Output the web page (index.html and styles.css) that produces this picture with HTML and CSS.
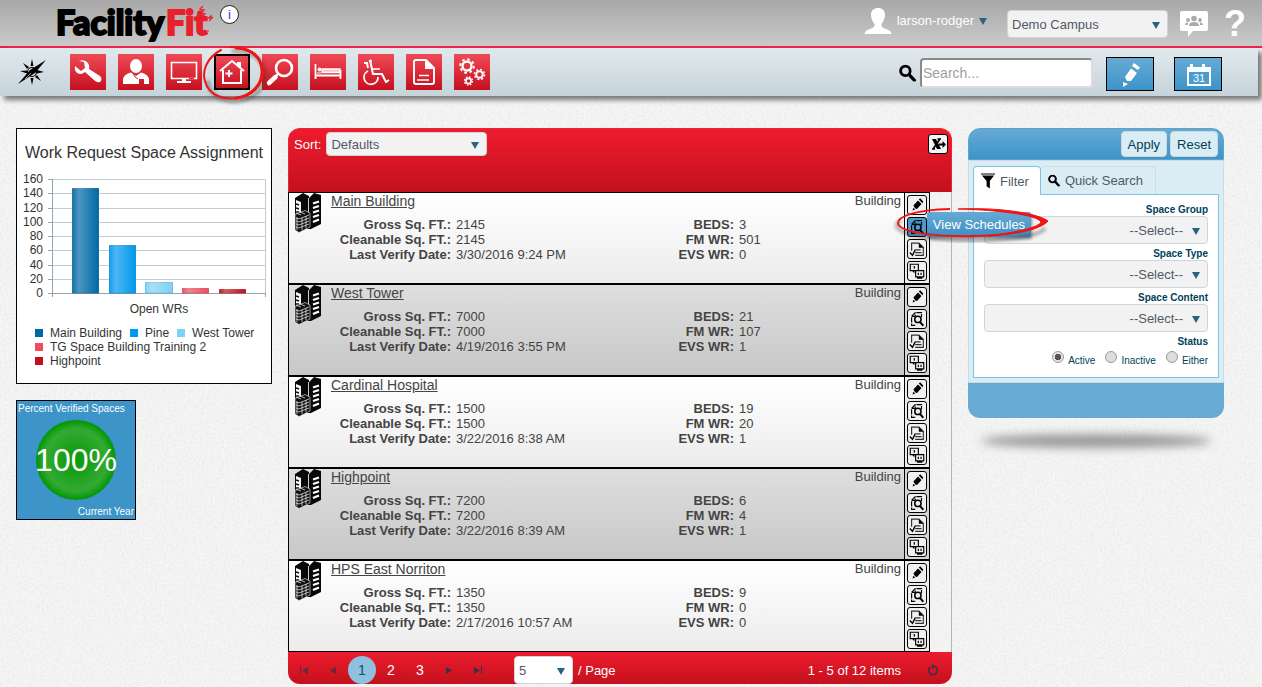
FILE: index.html
```html
<!DOCTYPE html>
<html lang="en">
<head>
<meta charset="utf-8">
<title>FacilityFit - Space</title>
<link rel="stylesheet" href="styles.css">
</head>
<body>
<svg class="paper" aria-hidden="true"><filter id="grain"><feTurbulence type="fractalNoise" baseFrequency="0.45" numOctaves="3" seed="4"/><feColorMatrix values="0 0 0 0 0.4  0 0 0 0 0.4  0 0 0 0 0.4  0.3 0 0 0 -0.12"/></filter><rect width="100%" height="100%" filter="url(#grain)"/></svg>
<svg class="sprite" aria-hidden="true">
  <symbol id="building" viewBox="0 0 28 40">
    <path d="M1 5 9 0 15 3V30H1z" fill="#080808"/><path d="M15 5 20 0 27 2V31L17 36H13V5z" fill="#080808"/>
    <path d="M2 7 7 9V19L2 21z" fill="#f4f4f4"/><path d="M2 11 5 12M2 15 5 16M2 19 5 19" stroke="#111" stroke-width="1.500"/>
    <path d="M14.500 5V20" stroke="#ccc"/>
    <path d="M19 10.500 25 8.500M19 15 25 13M19 19.500 25 17.500M19 24 25 22M19 29 25 26.500" stroke="#fff" stroke-width="2.200"/>
    <path d="M1 21.500 11 17.500 16 20V34L5 39.500 1 37z" fill="#101010" stroke="#f4f4f4" stroke-width=".6"/>
    <path d="M2 25 5 26 15 22M2 28 5 29 15 25M2 31 5 32 15 28M2 34 5 35 15 31M3 20.500 7 22M6 19 11 21M8 25V37M12 23V35M3 24V37" stroke="#ddd" stroke-width=".8" fill="none"/>
  </symbol>
  <symbol id="edit" viewBox="0 0 20 20"><path d="M5 16 6 13 8 15z M6 10.500 11 5 15 9 10 14.500 8 14z M12 4 13.500 2.500 17 6 16 8z" fill="#000"/></symbol>
  <symbol id="look" viewBox="0 0 20 20"><path d="M8 17H4V7L8 3H15V8M4 7H8V3" fill="none" stroke="#000" stroke-width="1.300" stroke-dasharray="6 1"/><circle cx="11" cy="10.500" r="3.500" fill="none" stroke="#000" stroke-width="1.700"/><path d="M13 13 17 17.500" stroke="#000" stroke-width="2.200"/></symbol>
  <symbol id="check" viewBox="0 0 20 20"><path d="M4 12V3.500H12L17 8V17H8M8 14H15M8 11H14" fill="none" stroke="#333" stroke-width="1.300"/><path d="M12 3V8.500H17z"/><path d="M2 14 5 17 8 11" fill="none" stroke="#000" stroke-width="1.500"/></symbol>
  <symbol id="boxes" viewBox="0 0 20 20"><path d="M2.500 2.500H11.500V9.500H6.500V11L5 9.500H2.500zM8.500 9.500H17.500V16.500H8.500zM10 18H16M7 4.500V7.500M11.500 12V14.500M14.500 12V14.500" fill="none" stroke="#000" stroke-width="1.300"/></symbol>
  <symbol id="glass" viewBox="0 0 16 16"><circle cx="6" cy="6" r="4.500" fill="none" stroke="#000" stroke-width="2.600"/><path d="M9.500 9.500 14.500 15" stroke="#000" stroke-width="3" stroke-linecap="round"/></symbol>
</svg>

<header class="top">
  <a class="logo" href="#">Facility<span class="fit">Fit</span><svg class="squiggle" viewBox="0 0 16 26"><path d="M5 0 2 3 6 4 3 7 7 8 4 12 8 11 9 13 13 10 12 14 15 11" fill="none" stroke="#e8202e" stroke-width="1.300"/><path d="M8 25h3" stroke="#e8202e"/></svg></a>
  <button class="info" type="button" aria-label="Information">i</button>
  <a class="user" href="#"><svg viewBox="0 0 28 28" width="28" height="28"><path d="M14 1C18 1 21 3 21 8 21 12 19 15 17.500 17 17 20 19 21 22 22 25 23 27 24 27.500 27H.500C1 24 3 23 6 22 9 21 11 20 10.500 17 9 15 7 12 7 8 7 3 10 1 14 1z" fill="#fff"/></svg><span>larson-rodger</span><i class="caret"></i></a>
  <span class="pick campus"><select aria-label="Campus"><option>Demo Campus</option></select></span>
  <a class="chat" href="#" aria-label="Community"><svg viewBox="0 0 28 27" width="28" height="27"><path d="M2 0H26Q28 0 28 2V18Q28 20 26 20H13L8 26V20H2Q0 20 0 18V2Q0 0 2 0z" fill="#fff"/><g fill="#aaa"><circle cx="14" cy="7.500" r="2.800"/><path d="M9 15Q9 11 14 11T19 15z"/><circle cx="8" cy="9" r="1.900"/><circle cx="20" cy="9" r="1.900"/><path d="M5 14Q5 11 8 11.500V14zM23 14Q23 11 20 11.500V14z"/></g></svg></a>
  <a class="help" href="#">?</a>
</header>

<nav class="bar">
  <a class="compass" href="#" aria-label="Home"><svg viewBox="0 0 28 26" width="28" height="26"><path d="M14 0 15.500 7H12.500zM14 26 12.500 19H15.500zM2 12 9 11.500V14.500zM26 13 19 11V14.500zM5 4 11 8 9 10zM23 22 19 16 17 18z"/><circle cx="14" cy="13" r="4.500" fill="none" stroke="#000" stroke-width="1.200"/><path d="M28 1 17 14 0 25 12 11z"/><path d="M7 20 13 14" stroke="#d9e2e6" stroke-width=".7"/></svg></a>
  <ul class="apps">
    <li><a href="#" aria-label="Work requests"><svg viewBox="0 0 36 36"><path d="M5 12 11 17 15 14 14 8 9 7Q15 5 18 9 20 12 19 15L30 22Q33 25 30 28 27 29 24 26L15 18Q10 22 6 18 4 15 5 12z" fill="#fff"/></svg></a></li>
    <li><a href="#" aria-label="People"><svg viewBox="0 0 36 36"><ellipse cx="18" cy="12" rx="6" ry="7" fill="#fff"/><path d="M5 30V25Q6 20 13 18.500L18 22 23 18.500Q30 20 31 25V30H26V25H21V30z" fill="#fff"/><path d="M14 18 17 23 20 25" fill="none" stroke="#e23040" stroke-width="1"/></svg></a></li>
    <li><a href="#" aria-label="Assets"><svg viewBox="0 0 36 36"><path d="M5.500 8.500H30.500V24.500H5.500z" fill="none" stroke="#fff" stroke-width="1.600"/><path d="M16 25V27H11V29H25V27H20V25" fill="#fff"/><path d="M23 24.500H28" stroke="#d62839"/></svg></a></li>
    <li class="here"><a href="#" aria-label="Space"><svg viewBox="2 2 32 32"><path d="M6 17 18 7 30 17M9 16V29H27V16M24 12V9H26V13" fill="none" stroke="#fff" stroke-width="2"/><path d="M15 16V23M11.500 19.500H18.500" stroke="#fff" stroke-width="2"/></svg></a>
      <svg class="ring ring-app" viewBox="0 0 64 62"><g fill="none" stroke-linecap="round"><path d="M6 38C8 54 24 59 38 57 58 53 65 38 62 26 60 14 48 7 31 7" stroke="#333" stroke-opacity=".35" stroke-width="4" filter="url(#soft)"/><path d="M19 6C4 14 0 28 3 37 7 53 24 56 36 54 53 51 62 39 60 24 58 10 42 2 28 3" stroke="#f01414" stroke-width="2"/><path d="M34 4C50 5 59 13 60 26 61 40 50 52 34 54" stroke="#f01414" stroke-width="3"/></g><filter id="soft"><feGaussianBlur stdDeviation="1.500"/></filter></svg></li>
    <li><a href="#" aria-label="Find"><svg viewBox="0 0 36 36"><circle cx="22" cy="14" r="8" fill="none" stroke="#fff" stroke-width="2.600"/><path d="M16 20 13 23" stroke="#fff" stroke-width="2"/><path d="M13.500 23 7 29" stroke="#fff" stroke-width="4.500" stroke-linecap="round"/></svg></a></li>
    <li><a href="#" aria-label="Beds"><svg viewBox="0 0 36 36"><path d="M5.500 10V25M30.500 16V25M5 21.500H31" fill="none" stroke="#fff" stroke-width="1.800"/><path d="M12 15H30V18.500H12z" fill="#f8c4c8" stroke="#fff" stroke-width="1.300"/><circle cx="9.500" cy="15.500" r="1.900" fill="#fff"/><path d="M7 19H11" stroke="#fff"/></svg></a></li>
    <li><a href="#" aria-label="Patient transport"><svg viewBox="0 0 36 36"><path d="M6 9H9L10 14M12 6 15 20H24L28 28 31 26" fill="none" stroke="#fff" stroke-width="2"/><path d="M13 15H22" stroke="#fff" stroke-width="1.500"/><path d="M10 17A7 7 0 1 0 20 23" fill="none" stroke="#fff" stroke-width="1.800"/><circle cx="12.500" cy="7" r="1.600" fill="#fff"/></svg></a></li>
    <li><a href="#" aria-label="Documents"><svg viewBox="0 0 36 36"><path d="M10 6H20L28 14V28Q28 30 26 30H10Q8 30 8 28V8Q8 6 10 6z" fill="none" stroke="#fff" stroke-width="1.900"/><path d="M19 5V15H28z" fill="#fff"/><path d="M13 21.500H23M11 26H23" stroke="#fff" stroke-width="1.400"/></svg></a></li>
    <li><a href="#" aria-label="Settings"><svg viewBox="0 0 36 36"><g fill="none" stroke="#fff"><circle cx="13" cy="12" r="4.500" stroke-width="2.400"/><circle cx="13" cy="12" r="6.800" stroke-width="2" stroke-dasharray="2.670 2.670"/><circle cx="25.500" cy="20.500" r="3.300" stroke-width="2"/><circle cx="25.500" cy="20.500" r="5" stroke-width="1.600" stroke-dasharray="1.960 1.960"/><circle cx="14.500" cy="27" r="2.600" stroke-width="1.700"/><circle cx="14.500" cy="27" r="4" stroke-width="1.400" stroke-dasharray="1.570 1.570"/></g></svg></a></li>
  </ul>
  <form class="find"><label for="q" aria-label="Search"><svg width="17" height="18" viewBox="0 0 16 16"><use href="#glass"/></svg></label><input id="q" type="text" placeholder="Search..."></form>
  <div class="tools">
    <button type="button" aria-label="New request"><svg viewBox="0 0 46 32"><path d="M18 19 24 10.500 30 15 24 23 20 23zM25 8 27 5 33 9.500 31 12zM16 24V29L21 26z" fill="#fff"/></svg></button>
    <button type="button" aria-label="Calendar"><svg viewBox="0 0 46 32"><path d="M12 9H15V6H18V9H27V6H30V9H36V28H12z" fill="#fff"/><path d="M14 14H34V26H14z" fill="#4b9ccc"/><text x="24" y="24" text-anchor="middle" class="cal">31</text></svg></button>
  </div>
</nav>

<main class="page">
  <aside class="side">
    <section class="chart">
      <h2>Work Request Space Assignment</h2>
      <svg class="plot" viewBox="0 0 254 150" role="img" aria-label="Open work requests by space">
        <defs>
          <linearGradient id="gl"><stop offset="0" stop-color="#fff" stop-opacity=".05"/><stop offset=".25" stop-color="#fff" stop-opacity=".3"/><stop offset="1" stop-color="#fff" stop-opacity="0"/></linearGradient>
        </defs>
        <path d="M35 8.500H248.500V122.500M35 22.500H248M35 37.500H248M35 51.500H248M35 65.500H248M35 79.500H248M35 94.500H248M35 108.500H248" fill="none" stroke="#c0cbd3"/>
        <path d="M35.500 8V126M31 122.500H249M248.500 122V126M31 8.500H35M31 22.500H35M31 37.500H35M31 51.500H35M31 65.500H35M31 79.500H35M31 94.500H35M31 108.500H35" fill="none" stroke="#94a3b0"/>
        <g stroke-opacity=".8">
          <path d="M55.500 122V17.500H81.500V122z" fill="#0069a5" stroke="#00588b"/><path d="M92.500 122V74.500H118.500V122z" fill="#0098ee" stroke="#0080c8"/><path d="M128.500 122V111.500H155.500V122z" fill="#7bd2f6" stroke="#67b0cf"/><path d="M165.500 122V117.500H191.500V122z" fill="#f04c5c" stroke="#c8404d"/><path d="M202.500 122V118.500H228.500V122z" fill="#c4101e" stroke="#a50d19"/>
        </g>
        <path d="M55 17H82V122H55z" fill="url(#gl)"/><path d="M92 74H119V122H92z" fill="url(#gl)"/><path d="M128 111H156V122H128z" fill="url(#gl)"/><path d="M165 117H192V122H165z" fill="url(#gl)"/><path d="M202 118H229V122H202z" fill="url(#gl)"/>
        <g text-anchor="end"><text x="26" y="12">160</text><text x="26" y="26">140</text><text x="26" y="41">120</text><text x="26" y="55">100</text><text x="26" y="69">80</text><text x="26" y="83">60</text><text x="26" y="98">40</text><text x="26" y="112">20</text><text x="26" y="126">0</text></g>
        <text x="142" y="142" text-anchor="middle">Open WRs</text>
      </svg>
      <ul class="legend"><li class="c1">Main Building</li><li class="c2">Pine</li><li class="c3">West Tower</li><li class="c4">TG Space Building Training 2</li><li class="c5">Highpoint</li></ul>
    </section>
    <section class="gauge"><p>Percent Verified Spaces</p><strong><span>100%</span></strong><p class="end">Current Year</p></section>
  </aside>

  <section class="list">
    <div class="list-head">
      <label for="sort">Sort:</label><span class="pick sort"><select id="sort"><option>Defaults</option></select></span>
      <button class="export" type="button" aria-label="Export to Excel"><svg viewBox="0 0 18 18"><path d="M3 4H7L12 14H8z"/><path d="M11 4 4 14M3 14H6M8.500 4H12" stroke="#000" stroke-width="1.600"/><path d="M10 9.500H15" stroke="#000" stroke-width="2"/><path d="M13.500 6 17 9.500 13.500 13z"/></svg></button>
    </div>
    <ul class="rows">
      <li class="row">
        <div class="cell"><svg class="thumb"><use href="#building"/></svg><div class="info-col"><div class="title"><a href="#">Main Building</a><span>Building</span></div>
          <dl><dt>Gross Sq. FT.:</dt><dd>2145</dd><dt>BEDS:</dt><dd>3</dd><dt>Cleanable Sq. FT.:</dt><dd>2145</dd><dt>FM WR:</dt><dd>501</dd><dt>Last Verify Date:</dt><dd>3/30/2016 9:24 PM</dd><dt>EVS WR:</dt><dd>0</dd></dl></div></div>
        <div class="acts"><button type="button" aria-label="Edit"><svg><use href="#edit"/></svg></button>
          <div class="hot"><button type="button" class="on" aria-describedby="tip"><svg><use href="#look"/></svg></button><span class="tip" id="tip" role="tooltip">View Schedules</span>
            <svg class="ring ring-tip" viewBox="0 0 160 40"><g fill="none"><path d="M8 14C-6 24 16 31 60 34 96 36 144 33 152 22" stroke="#333" stroke-opacity=".35" stroke-width="4" filter="url(#soft)"/><path d="M57 3C20 4 5 11 5 17 6 27 45 31 84 30 118 29 145 24 150 17" stroke="#f01414" stroke-width="2"/><path d="M65 3C110 1 146 8 155 15 150 22 125 28 95 30 126 26 146 21 148 16 145 9 105 4 65 3z" fill="#f01414" stroke="#f01414" stroke-width="1"/></g></svg></div>
          <button type="button" aria-label="Inspections"><svg><use href="#check"/></svg></button><button type="button" aria-label="Hierarchy"><svg><use href="#boxes"/></svg></button></div>
      </li>
      <li class="row alt">
        <div class="cell"><svg class="thumb"><use href="#building"/></svg><div class="info-col"><div class="title"><a href="#">West Tower</a><span>Building</span></div>
          <dl><dt>Gross Sq. FT.:</dt><dd>7000</dd><dt>BEDS:</dt><dd>21</dd><dt>Cleanable Sq. FT.:</dt><dd>7000</dd><dt>FM WR:</dt><dd>107</dd><dt>Last Verify Date:</dt><dd>4/19/2016 3:55 PM</dd><dt>EVS WR:</dt><dd>1</dd></dl></div></div>
        <div class="acts"><button type="button" aria-label="Edit"><svg><use href="#edit"/></svg></button><button type="button" aria-label="View Schedules"><svg><use href="#look"/></svg></button><button type="button" aria-label="Inspections"><svg><use href="#check"/></svg></button><button type="button" aria-label="Hierarchy"><svg><use href="#boxes"/></svg></button></div>
      </li>
      <li class="row">
        <div class="cell"><svg class="thumb"><use href="#building"/></svg><div class="info-col"><div class="title"><a href="#">Cardinal Hospital</a><span>Building</span></div>
          <dl><dt>Gross Sq. FT.:</dt><dd>1500</dd><dt>BEDS:</dt><dd>19</dd><dt>Cleanable Sq. FT.:</dt><dd>1500</dd><dt>FM WR:</dt><dd>20</dd><dt>Last Verify Date:</dt><dd>3/22/2016 8:38 AM</dd><dt>EVS WR:</dt><dd>1</dd></dl></div></div>
        <div class="acts"><button type="button" aria-label="Edit"><svg><use href="#edit"/></svg></button><button type="button" aria-label="View Schedules"><svg><use href="#look"/></svg></button><button type="button" aria-label="Inspections"><svg><use href="#check"/></svg></button><button type="button" aria-label="Hierarchy"><svg><use href="#boxes"/></svg></button></div>
      </li>
      <li class="row alt">
        <div class="cell"><svg class="thumb"><use href="#building"/></svg><div class="info-col"><div class="title"><a href="#">Highpoint</a><span>Building</span></div>
          <dl><dt>Gross Sq. FT.:</dt><dd>7200</dd><dt>BEDS:</dt><dd>6</dd><dt>Cleanable Sq. FT.:</dt><dd>7200</dd><dt>FM WR:</dt><dd>4</dd><dt>Last Verify Date:</dt><dd>3/22/2016 8:39 AM</dd><dt>EVS WR:</dt><dd>1</dd></dl></div></div>
        <div class="acts"><button type="button" aria-label="Edit"><svg><use href="#edit"/></svg></button><button type="button" aria-label="View Schedules"><svg><use href="#look"/></svg></button><button type="button" aria-label="Inspections"><svg><use href="#check"/></svg></button><button type="button" aria-label="Hierarchy"><svg><use href="#boxes"/></svg></button></div>
      </li>
      <li class="row">
        <div class="cell"><svg class="thumb"><use href="#building"/></svg><div class="info-col"><div class="title"><a href="#">HPS East Norriton</a><span>Building</span></div>
          <dl><dt>Gross Sq. FT.:</dt><dd>1350</dd><dt>BEDS:</dt><dd>9</dd><dt>Cleanable Sq. FT.:</dt><dd>1350</dd><dt>FM WR:</dt><dd>0</dd><dt>Last Verify Date:</dt><dd>2/17/2016 10:57 AM</dd><dt>EVS WR:</dt><dd>0</dd></dl></div></div>
        <div class="acts"><button type="button" aria-label="Edit"><svg><use href="#edit"/></svg></button><button type="button" aria-label="View Schedules"><svg><use href="#look"/></svg></button><button type="button" aria-label="Inspections"><svg><use href="#check"/></svg></button><button type="button" aria-label="Hierarchy"><svg><use href="#boxes"/></svg></button></div>
      </li>
    </ul>
    <div class="pager">
      <div class="pages">
        <button type="button" class="dim" aria-label="First page"><svg viewBox="0 0 8 8"><path d="M0 0H1V8H0zM8 1V8L2 4.500z"/></svg></button>
        <button type="button" class="dim" aria-label="Previous page"><svg viewBox="0 0 8 8"><path d="M7 1V8L1 4.500z"/></svg></button>
        <button type="button" class="now">1</button><button type="button">2</button><button type="button">3</button>
        <button type="button" aria-label="Next page"><svg viewBox="0 0 8 8"><path d="M1 1V8L7 4.500z"/></svg></button>
        <button type="button" aria-label="Last page"><svg viewBox="0 0 8 8"><path d="M0 1V8L6 4.500zM7 0H8V8H7z"/></svg></button>
      </div>
      <span class="pick size"><select id="size"><option>5</option></select></span><label for="size">/ Page</label>
      <span class="count">1 - 5 of 12 items</span>
      <button type="button" class="refresh" aria-label="Refresh"><svg viewBox="0 0 12 12"><path d="M3.500 2.800A4.300 4.300 0 1 0 8.500 2.800" fill="none" stroke="#3a3048" stroke-width="1.600"/><path d="M5 0 9 2.500 5 5z" fill="#3a3048"/></svg></button>
    </div>
  </section>

  <aside class="filter">
    <div class="filter-head"><button type="button">Apply</button><button type="button">Reset</button></div>
    <div class="filter-body">
      <div class="tabs" role="tablist">
        <button type="button" role="tab" class="active"><svg width="14" height="16" viewBox="0 0 15 16"><path d="M0 0H15V1H0zM1 2H14L9.500 8V16L6 13.500V8z"/></svg>Filter</button><button type="button" role="tab"><svg width="12" height="13" viewBox="0 0 16 16"><use href="#glass"/></svg>Quick Search</button>
      </div>
      <form class="panel">
        <label for="g1">Space Group</label><span class="pick"><select id="g1"><option>--Select--</option></select></span>
        <label for="g2">Space Type</label><span class="pick"><select id="g2"><option>--Select--</option></select></span>
        <label for="g3">Space Content</label><span class="pick"><select id="g3"><option>--Select--</option></select></span>
        <fieldset><legend>Status</legend><div class="radios"><label><input type="radio" name="st" checked>Active</label><label><input type="radio" name="st">Inactive</label><label><input type="radio" name="st">Either</label></div></fieldset>
      </form>
    </div>
    <div class="filter-foot"></div>
    <div class="floor"></div>
  </aside>
</main>
</body>
</html>
```
FILE: styles.css
```css
* { box-sizing: border-box; }
body { margin: 0; background: #f5f5f5; font: 13px/15px "Liberation Sans", Arial, sans-serif; color: #444; }
ul, dl, dd, p, h2, fieldset { margin: 0; padding: 0; border: 0; }
ul { list-style: none; }
a { color: inherit; text-decoration: none; }
button, input, select { font: inherit; color: inherit; margin: 0; }
button { padding: 0; cursor: pointer; }
svg { display: block; }
.sprite { position: absolute; width: 0; height: 0; }
.paper { position: absolute; z-index: -1; top: 0; left: 0; width: 100%; height: 100%; }

.pick { display: grid; }
.pick select { grid-area: 1 / 1; width: 100%; height: 100%; appearance: none; border: 1px solid #d2d4d5; border-radius: 4px; background: #f2f2f2; color: #515967; padding: 0 4px; outline: 0; }
.pick::after { content: ""; grid-area: 1 / 1; place-self: center end; margin: 2px 8px 0 0; pointer-events: none; }
.pick::after, .caret { border: 4px solid transparent; border-top: 7px solid #2a6280; border-bottom: 0; }

.top { display: flex; align-items: flex-start; height: 48px; padding: 0 16px 0 56px; background: linear-gradient(#a8a8a8, #cacaca); border-bottom: 2px solid #ed2148; }
.logo { display: flex; padding-top: 2px; font: 900 34px/40px Lato, sans-serif; color: #000; -webkit-text-stroke: 2px currentcolor; }
.fit { margin-left: 2px; color: #e8202e; }
.squiggle { width: 16px; height: 26px; margin: 4px 0 0 -9px; }
.info { width: 19px; height: 19px; margin: 5px 0 0 6px; border: 1px solid #222; border-radius: 50%; background: #fff; color: #3030f0; font-size: 13px; line-height: 16px; }
.user { display: flex; align-items: center; gap: 5px; margin: 7px 20px 0 auto; color: #fff; }
.user span { padding-bottom: 1px; }
.campus { width: 161px; height: 28px; margin-top: 10px; }
.chat { margin: 11px 16px 0 12px; }
.help { padding-top: 4px; font: bold 36px/40px "Liberation Sans", Arial, sans-serif; color: #fff; }

.bar { position: relative; z-index: 1; display: flex; align-items: center; height: 48px; margin-right: 4px; padding: 0 36px 0 18px; background: linear-gradient(#e2e9ec, #c5d4da); box-shadow: 4px 4px 5px #777; }
.apps { display: flex; gap: 12px; margin: 0 auto 0 24px; }
.apps li { position: relative; }
.apps a { display: block; width: 36px; height: 36px; background: linear-gradient(#f04a57, #c50f1e); }
.apps .here { z-index: 2; }
.here a { border: 2px solid #000; }
.ring { position: absolute; pointer-events: none; overflow: visible; }
.ring-app { left: -12px; top: -10px; width: 64px; height: 62px; }
.find { display: flex; align-items: center; gap: 4px; margin: 2px 13px 0 0; }
.find input { width: 173px; height: 30px; border: 2px inset #ddd; border-radius: 4px; padding: 0 1px; background: #fff; font-size: 14px; outline: 0; }
.find input::placeholder { color: #a0a0a0; }
.tools { display: flex; gap: 20px; padding-top: 4px; }
.tools button { width: 48px; height: 34px; border: 1px solid #000; background: linear-gradient(#67aad4, #3c94c9); }
.cal { font-size: 11px; fill: #fff; }

.page { display: flex; align-items: flex-start; gap: 16px; padding: 32px 38px 3px 16px; }
.side, .filter { flex: 0 0 256px; }
.chart { border: 1px solid #000; background: #fff; color: #333; font-size: 12px; }
.chart h2 { padding-top: 13px; font-size: 16px; font-weight: normal; line-height: 22px; text-align: center; white-space: nowrap; }
.plot { width: 100%; margin-top: 7px; fill: #333; }
.legend { display: flex; flex-wrap: wrap; gap: 0 8px; padding: 5px 8px 15px 18px; line-height: 14px; }
.legend li { display: flex; align-items: center; gap: 7px; }
.legend li::before { content: ""; width: 8px; height: 8px; background: currentcolor; }
.c1::before { color: #0069a5; } .c2::before { color: #0098ee; } .c3::before { color: #7bd2f6; } .c4::before { color: #f04c5c; } .c5::before { color: #c4101e; }
.c4, .c5 { flex-basis: 100%; }
.gauge { width: 120px; height: 120px; margin-top: 16px; padding: 1px; border: 1px solid #000; background: #3c94c9; color: #fff; font-size: 10px; line-height: 13px; display: flex; flex-direction: column; justify-content: space-between; }
.gauge strong { display: flex; align-items: center; justify-content: center; align-self: center; width: 80px; height: 80px; border-radius: 50%; background: radial-gradient(#0f9b0f 10%, #33aa33 55%, #009500 71%); font-size: 32px; font-weight: normal; }
.end { text-align: right; }

.list { flex: 1; min-width: 0; }
.list-head { display: flex; align-items: flex-start; height: 64px; padding: 3px 4px 0 5px; border: 1px solid #ec2533; border-bottom: 0; border-radius: 12px 12px 0 0; background: linear-gradient(#ed1c2e, #c3111d); color: #fff; }
.list-head label { padding-top: 5px; }
.sort { width: 161px; height: 24px; margin-left: 5px; }
.export { width: 20px; height: 20px; margin: 2px -1px 0 auto; border: 1px solid #000; border-radius: 3px; background: #f4f4f4; }
.rows { padding-right: 21px; border-right: 1px solid #b4b4b4; }
.row { display: flex; border: 1px solid #000; background: linear-gradient(#fff, #ececec); }
.alt { background: linear-gradient(#dedede, #c8c8c8); }
.cell { flex: 1; display: flex; gap: 9px; padding-left: 5px; border-right: 1px solid #000; }
.thumb { width: 28px; height: 40px; }
.info-col { flex: 1; }
.title { display: flex; justify-content: space-between; padding-right: 3px; }
.title a { font-size: 14px; line-height: 17px; text-decoration: underline; }
.cell dl { display: grid; grid-template-columns: 120px 1fr 60px 165px; column-gap: 5px; padding-top: 7px; }
.cell dt { font-weight: bold; text-align: right; white-space: nowrap; }
.acts { display: grid; gap: 2px; padding: 2px; background: #ececec; }
.alt .acts { background: #d4d4d4; }
.acts button { display: block; width: 20px; height: 20px; border: 1px solid #000; border-radius: 3px; background: #f0f0f0; }
.acts svg:not(.ring) { width: 18px; height: 18px; }
.acts .on { background: #4b9ccc; }
.hot { position: relative; z-index: 3; }
.tip { position: absolute; left: 20px; top: -5px; width: 104px; line-height: 25px; text-align: center; color: #fff; background: linear-gradient(#67aad4, #3c8fc4); box-shadow: 1px 2px 3px rgba(0, 0, 0, .4); border-radius: 2px; }
.ring-tip { left: -14px; top: -11px; width: 160px; height: 40px; }
.pager { display: flex; align-items: center; height: 32px; padding: 4px 13px 0 2px; border-radius: 0 0 12px 12px; background: linear-gradient(#ed1c2e, #c3111d); color: #fff; }
.pages { display: flex; gap: 1px; margin-right: 22px; }
.pager button { width: 28px; height: 28px; border: 0; border-radius: 50%; background: none; font-size: 14px; }
.pager button svg { width: 8px; height: 8px; margin: auto; fill: #3a3048; }
.pager .dim svg { opacity: .7; }
.pager .now { background: #8fc0df; color: #0e4d6c; }
.size { width: 59px; height: 28px; margin-right: 5px; }
.size select { background: #fff; }
.count { margin-left: auto; margin-right: 25px; }
.pager .refresh { width: 13px; }
.pager .refresh svg { width: 12px; height: 12px; }

.filter-head { display: flex; justify-content: flex-end; gap: 3px; height: 32px; padding: 2px 5px; border: 1px solid #5fa3cd; border-radius: 12px 12px 0 0; background: linear-gradient(#67aad4, #3c94c9); }
.filter-head button { height: 26px; padding: 0 6px; border: 1px solid #d3d7dc; border-radius: 4px; background: #daecf4; color: #003f59; }
.filter-body { padding: 5px 4px 4px; border: 1px solid #ccdbe3; background: #daecf4; }
.tabs { display: flex; }
.tabs button { display: flex; align-items: center; gap: 5px; height: 28px; padding: 0 12px 0 7px; border: 1px solid #d3dbe0; border-width: 1px 1px 0 0; border-radius: 4px 4px 0 0; background: #daecf4; color: #515967; }
.tabs .active { position: relative; height: 29px; margin-bottom: -1px; padding-right: 11px; border: 1px solid #7cc3e4; border-bottom: 0; background: #fff; }
.panel { display: grid; padding: 9px 10px 9px; border: 1px solid #7cc3e4; background: #fff; color: #003f59; font-size: 10px; font-weight: bold; text-align: right; }
.panel > label, .panel legend { line-height: 12px; }
.panel .pick { height: 28px; margin-bottom: 4px; font-size: 13px; font-weight: normal; }
.panel legend { margin-left: auto; padding: 0; }
.panel select { padding-right: 24px; text-align-last: right; }
.radios { display: flex; justify-content: flex-end; gap: 10px; font-weight: normal; }
.radios label { display: flex; align-items: flex-end; gap: 4px; height: 20px; line-height: 14px; }
.radios input { appearance: none; width: 12px; height: 12px; margin-bottom: 5px; border: 1px solid #999; border-radius: 50%; background: #ddd; }
.radios input:checked { background: radial-gradient(#555 0 3px, #e2e2e2 3px); }
.filter-foot { height: 35px; border-radius: 0 0 12px 12px; background: #67aad4; }
.floor { height: 14px; margin: 16px 12px 0; border-radius: 50%; background: #999; filter: blur(5px); }
```
